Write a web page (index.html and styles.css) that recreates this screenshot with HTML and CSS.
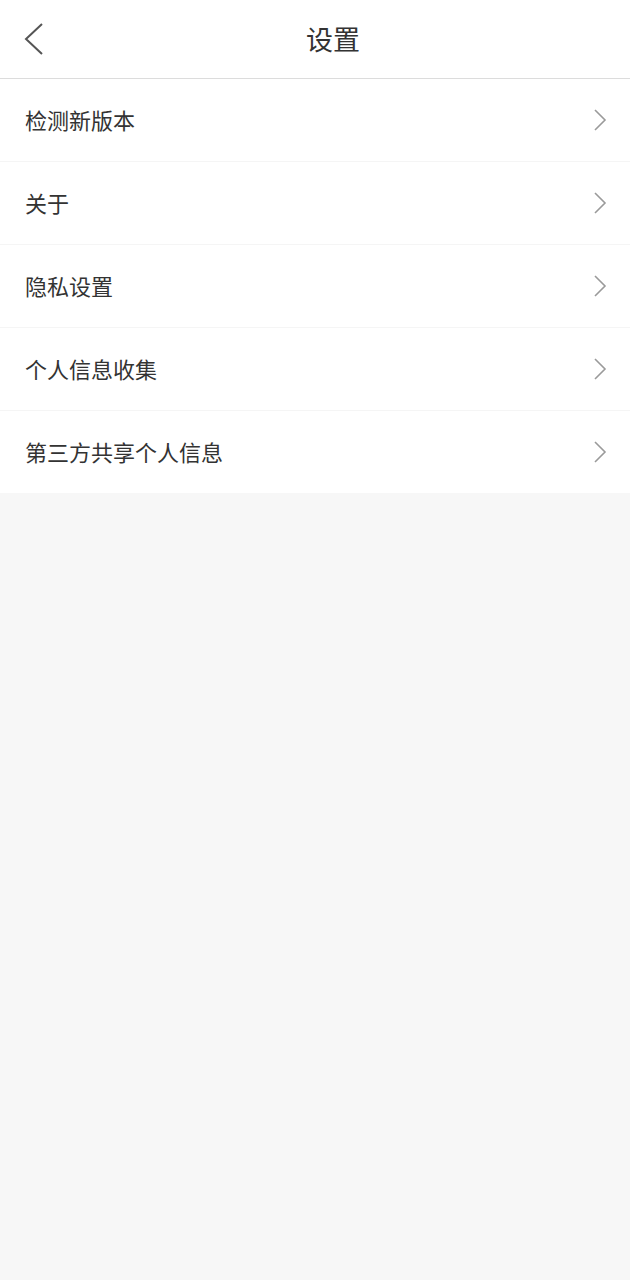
FILE: index.html
```html
<!DOCTYPE html>
<html lang="zh">
<head>
<meta charset="utf-8">
<title>设置</title>
<link rel="stylesheet" href="styles.css">
</head>
<body>
<header class="header">
  <span class="back">
    <svg width="22" height="34" viewBox="0 0 22 34"><path d="M19 2 L3 17 L19 32" fill="none" stroke="#555" stroke-width="2"/></svg>
  </span>
  <h1 class="title">设置</h1>
</header>
<ul class="list">
  <li class="row"><span class="label">检测新版本</span><svg class="arrow" width="14" height="24" viewBox="0 0 14 24"><path d="M2 2 L12 12 L2 22" fill="none" stroke="#9a9a9a" stroke-width="1.6"/></svg></li>
  <li class="row"><span class="label">关于</span><svg class="arrow" width="14" height="24" viewBox="0 0 14 24"><path d="M2 2 L12 12 L2 22" fill="none" stroke="#9a9a9a" stroke-width="1.6"/></svg></li>
  <li class="row"><span class="label">隐私设置</span><svg class="arrow" width="14" height="24" viewBox="0 0 14 24"><path d="M2 2 L12 12 L2 22" fill="none" stroke="#9a9a9a" stroke-width="1.6"/></svg></li>
  <li class="row"><span class="label">个人信息收集</span><svg class="arrow" width="14" height="24" viewBox="0 0 14 24"><path d="M2 2 L12 12 L2 22" fill="none" stroke="#9a9a9a" stroke-width="1.6"/></svg></li>
  <li class="row"><span class="label">第三方共享个人信息</span><svg class="arrow" width="14" height="24" viewBox="0 0 14 24"><path d="M2 2 L12 12 L2 22" fill="none" stroke="#9a9a9a" stroke-width="1.6"/></svg></li>
</ul>
</body>
</html>
```
FILE: styles.css
```css
html, body {
  margin: 0;
  padding: 0;
  background: #f7f7f7;
  font-family: "Noto Sans CJK SC", "Noto Sans", sans-serif;
  color: #333;
}
.header {
  height: 78px;
  background: #fff;
  border-bottom: 1px solid #dcdcdc;
  display: flex;
  align-items: center;
  position: relative;
}
.back {
  position: absolute;
  left: 23px;
  top: 22px;
  display: block;
  line-height: 0;
}
.title {
  flex: 1;
  margin: 0 0 2px;
  padding-left: 36px;
  text-align: center;
  font-size: 27px;
  font-weight: 400;
  color: #333;
}
.list {
  list-style: none;
  margin: 0;
  padding: 0;
  background: #fff;
}
.row {
  height: 82px;
  display: flex;
  align-items: center;
  justify-content: space-between;
  padding: 0 23px 0 25px;
  font-size: 22px;
  color: #333;
  border-bottom: 1px solid #f5f5f5;
}
.label {
  margin-bottom: 3px;
}
.row:last-child {
  border-bottom: none;
}
.arrow {
  display: block;
}
```
